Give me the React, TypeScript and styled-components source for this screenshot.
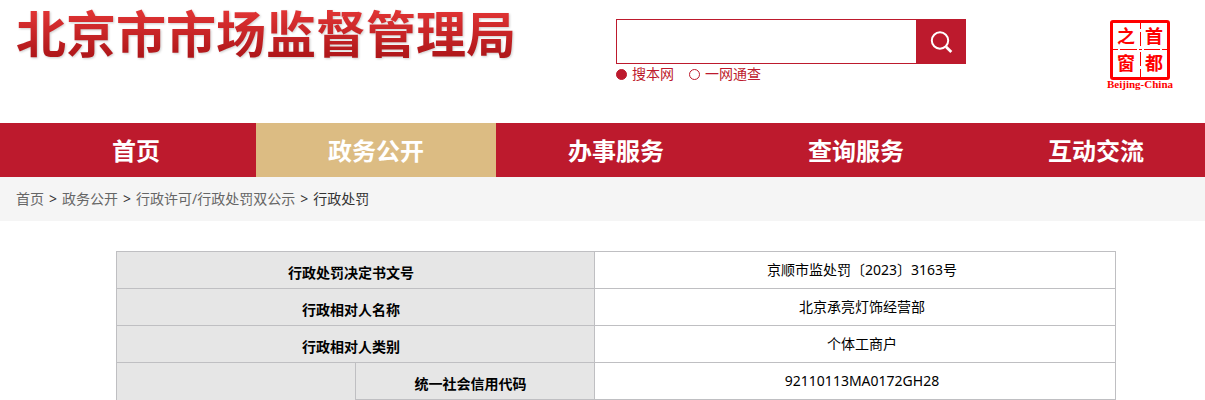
import React, { useState } from 'react';
import styled, { createGlobalStyle } from 'styled-components';

const red = '#bd1a2d';
const sans = '"Noto Sans", "Noto Sans CJK SC", sans-serif';

const GlobalStyle = createGlobalStyle`
  *, *::before, *::after { box-sizing: border-box; }
  body { margin: 0; background: #fff; color: #000; font: 14px/20px ${sans}; overflow-x: hidden; }
`;

const Header = styled.header`
  display: grid;
  grid-template-columns: 600px 350px 1fr;
  align-items: start;
  padding: 0 31px 33px 16px;
`;

const SiteTitle = styled.h1`
  margin: 0;
  padding-top: 1px;
  justify-self: start;
  font: 700 50px/60px "Noto Sans CJK SC", sans-serif;
  color: transparent;
  background: linear-gradient(#e23535 15%, #b0171a 90%);
  background-clip: text;
  -webkit-background-clip: text;
  filter: drop-shadow(1px 1px 1px rgba(0, 0, 0, 0.2));
`;

const Search = styled.form`
  padding-top: 19px;
`;

const SearchBar = styled.div`
  display: flex;
  height: 45px;
  border: 1px solid ${red};
`;

const SearchInput = styled.input`
  flex: 1;
  min-width: 0;
  border: 0;
  padding: 0 10px;
  font: inherit;
  outline: none;
`;

const SearchButton = styled.button`
  display: flex;
  align-items: center;
  justify-content: center;
  width: 49px;
  padding: 0;
  border: 0;
  background: ${red};
  cursor: pointer;
`;

const Scopes = styled.div`
  display: flex;
  gap: 15px;
`;

const Scope = styled.label`
  display: flex;
  align-items: center;
  gap: 5px;
  color: ${red};
`;

const Radio = styled.input`
  appearance: none;
  width: 11px;
  height: 11px;
  margin: 0;
  border: 1px solid ${red};
  border-radius: 50%;
  &:checked { background: ${red}; }
`;

const SealLink = styled.a`
  display: block;
  justify-self: end;
  padding-top: 19px;
  svg { display: block; }
`;

const Nav = styled.nav`
  display: flex;
  padding-left: 16px;
  overflow: hidden;
  background: ${red};
`;

const NavLink = styled.a<{ $active?: boolean }>`
  flex: 1 0 240px;
  padding-top: 2px;
  background: ${(p) => (p.$active ? '#dcbc83' : 'transparent')};
  color: #fff;
  font-size: 24px;
  font-weight: 700;
  line-height: 52px;
  text-align: center;
  text-decoration: none;
`;

const Breadcrumb = styled.nav`
  display: flex;
  gap: 5px;
  padding: 0 16px;
  background: #f5f5f5;
  color: #333;
  line-height: 44px;
`;

const Crumb = styled.a`
  color: #666;
  text-decoration: none;
`;

const Main = styled.main`
  padding: 30px 89px 0 116px;
`;

const Table = styled.table`
  width: 100%;
  table-layout: fixed;
  border-collapse: collapse;
`;

const LabelColumn = styled.col`
  width: 239px;
`;

const Label = styled.th<{ $open?: boolean }>`
  height: 37px;
  padding: 6px 9px 0 0;
  border: 1px solid #bfbfc2;
  ${(p) => p.$open && 'border-bottom: 0;'}
  background: #e6e6e6;
  font-weight: 700;
`;

const Value = styled.td`
  height: 37px;
  padding: 0 0 0 14px;
  border: 1px solid #bfbfc2;
  text-align: center;
`;

const SearchIcon = () => (
  <svg width="24" height="24" viewBox="0 0 24 24" fill="none" stroke="#fff" aria-hidden="true">
    <circle cx="11" cy="10.5" r="8.2" strokeWidth="2" />
    <path d="M17 16.7 L22.3 22" strokeWidth="2.8" />
  </svg>
);

const Seal = () => (
  <svg width="68" height="71" viewBox="0 0 68 71" role="img" aria-label="首都之窗">
    <rect x="5.5" y="2.5" width="57" height="57" rx="1.5" fill="none" stroke="#f00" strokeWidth="3" />
    <path
      d="M34.5 4V10M34.5 13V27M34.5 33V47M34.5 50V58M7 30.5H12M14 30.5H31M33 30.5H36M38 30.5H54M56 30.5H61"
      stroke="#f00"
      strokeWidth="1"
    />
    <g fill="#f00" fontFamily="'Noto Sans CJK SC', sans-serif" fontWeight="700" fontSize="18" textAnchor="middle">
      <text x="20" y="24">之</text>
      <text x="48" y="24">首</text>
      <text x="20" y="51">窗</text>
      <text x="48" y="51">都</text>
    </g>
    <text x="34" y="69" fill="#f00" fontFamily="'Liberation Serif', serif" fontWeight="700" fontSize="11" textAnchor="middle">
      Beijing-China
    </text>
  </svg>
);

const sections = ['首页', '政务公开', '办事服务', '查询服务', '互动交流'];
const trail = ['首页', '政务公开', '行政许可/行政处罚双公示'];
const facts = [
  ['行政处罚决定书文号', '京顺市监处罚〔2023〕3163号'],
  ['行政相对人名称', '北京承亮灯饰经营部'],
  ['行政相对人类别', '个体工商户'],
];

export default function App() {
  const [scope, setScope] = useState('搜本网');
  return (
    <>
      <GlobalStyle />
      <Header>
        <SiteTitle>北京市市场监督管理局</SiteTitle>
        <Search onSubmit={(e) => e.preventDefault()}>
          <SearchBar>
            <SearchInput type="text" aria-label="搜索" />
            <SearchButton type="submit" aria-label="搜索">
              <SearchIcon />
            </SearchButton>
          </SearchBar>
          <Scopes>
            {['搜本网', '一网通查'].map((name) => (
              <Scope key={name}>
                <Radio type="radio" name="scope" checked={scope === name} onChange={() => setScope(name)} />
                {name}
              </Scope>
            ))}
          </Scopes>
        </Search>
        <SealLink href="#">
          <Seal />
        </SealLink>
      </Header>
      <Nav>
        {sections.map((name) => (
          <NavLink key={name} href="#" $active={name === '政务公开'}>
            {name}
          </NavLink>
        ))}
      </Nav>
      <Breadcrumb>
        {trail.map((name) => (
          <React.Fragment key={name}>
            <Crumb href="#">{name}</Crumb>
            <span>&gt;</span>
          </React.Fragment>
        ))}
        <span>行政处罚</span>
      </Breadcrumb>
      <Main>
        <Table>
          <colgroup>
            <LabelColumn />
            <LabelColumn />
            <col />
          </colgroup>
          <tbody>
            {facts.map(([label, value]) => (
              <tr key={label}>
                <Label colSpan={2} scope="row">{label}</Label>
                <Value>{value}</Value>
              </tr>
            ))}
            <tr>
              <Label $open />
              <Label scope="row">统一社会信用代码</Label>
              <Value>92110113MA0172GH28</Value>
            </tr>
          </tbody>
        </Table>
      </Main>
    </>
  );
}
